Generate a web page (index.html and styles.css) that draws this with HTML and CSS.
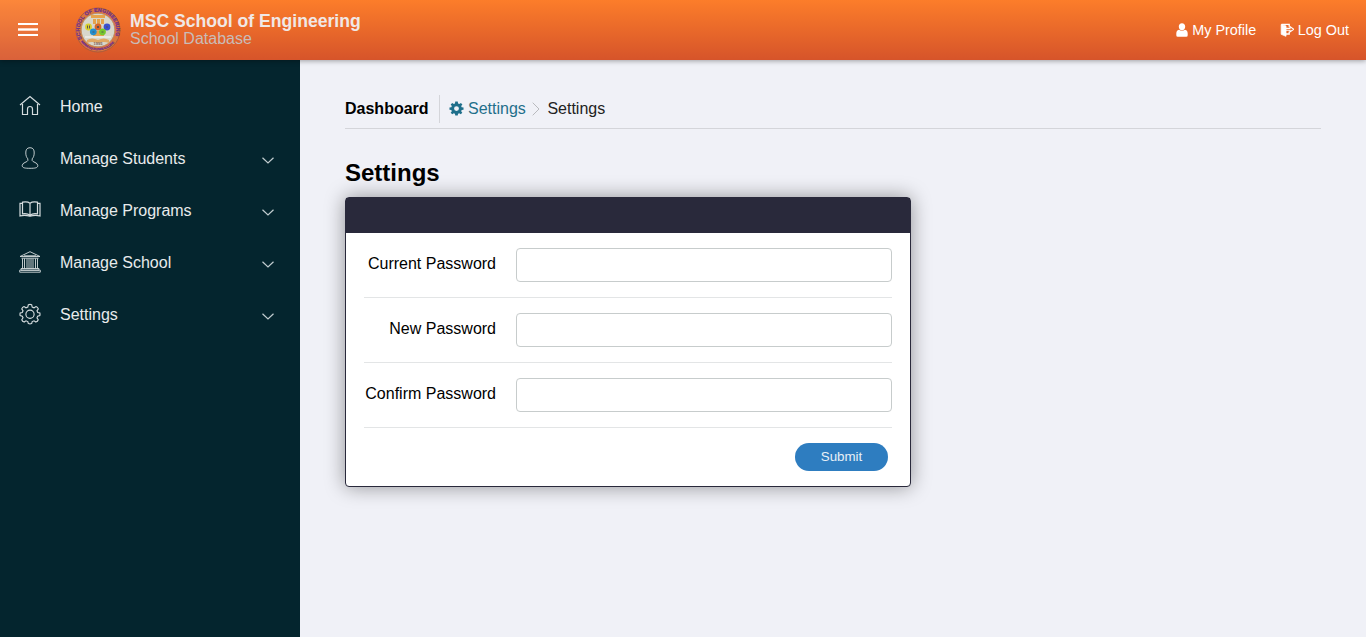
FILE: index.html
```html
<!DOCTYPE html>
<html lang="en">
<head>
<meta charset="utf-8">
<title>Settings</title>
<link rel="stylesheet" href="styles.css">
</head>
<body>
<header class="topbar">
  <button class="menu-toggle" aria-label="Menu"><span class="bar"></span><span class="bar middle"></span><span class="bar"></span></button>
  <svg class="logo" viewBox="0 0 46 46">
    <defs>
      <path id="arc-top" d="M7.100 31.800 A18.200 18.200 0 1 1 38.900 31.800"/>
      <path id="arc-bottom" d="M6 34.500 A20.900 20.900 0 0 0 40 34.500"/>
    </defs>
    <circle cx="23" cy="23" r="22" fill="#d9763f" stroke="#a55a3c" stroke-width=".9"/>
    <circle cx="23" cy="23" r="16.8" fill="#d8d7cb" stroke="#b9875a" stroke-width=".8"/>
    <path d="M16 8h14v3H16zM18 12h3v5h-3zM22 12h3v5h-3zM26 12h3v5h-3zM18 24h11v6H18z" fill="#e5a34c"/>
    <path d="M12 33q5-3 11 0q6-3 11 0v3q-5-2-11 0q-6-2-11 0z" fill="#e0a863"/>
    <path d="M10 30h26" stroke="#e8e8e2" stroke-width="2"/>
    <circle cx="13.5" cy="20" r="3.4" fill="#d9cf2c"/>
    <circle cx="23" cy="20" r="3.4" fill="#d7662a"/>
    <circle cx="32" cy="20" r="3.4" fill="#3b50d0"/>
    <circle cx="18.3" cy="24.8" r="3.4" fill="#238fce"/>
    <circle cx="27.5" cy="24.8" r="3.4" fill="#75c72d"/>
    <path d="M12.5 18.5v3M14.5 18.5v3M22 19l2 2M24 19l-2 2M31 20h2M17.5 25h2M26.5 25h2" stroke="#514c58" stroke-width=".9"/>
    <text class="seal-year" x="23" y="37.500" text-anchor="middle">1995</text>
    <text class="seal-top"><textPath href="#arc-top" textLength="72">SCHOOL OF ENGINEERING</textPath></text>
    <text class="seal-bottom"><textPath href="#arc-bottom" textLength="38">MARINDUQUE STATE COLLEGE</textPath></text>
  </svg>
  <div class="brand">
    <div class="brand-name">MSC School of Engineering</div>
    <div class="brand-sub">School Database</div>
  </div>
  <nav class="user-nav">
    <a class="user-link"><svg class="user-icon" width="12" height="14" viewBox="0 0 12 14"><path d="M6 .3C8 .3 9.200 1.600 9.200 3.600S8 7.400 6 7.400 2.800 5.600 2.800 3.600 4 .3 6 .3zM3 6.800Q6 9 9 6.800C10.900 7.200 11.700 8.600 11.700 10.500V12.200Q11.700 13.700 10.200 13.700H1.800Q.3 13.700.3 12.200V10.500C.3 8.600 1.100 7.200 3 6.800z" fill="#fff"/></svg>My Profile</a>
    <a class="user-link"><svg class="exit-icon" width="14" height="14" viewBox="0 0 14 14"><path d="M1.200 1.500L6 2.900V13.300L1.200 11.300z" fill="#fff" stroke="#fff" stroke-width=".8"/><path d="M1.500 1.300H9.200V3.800M9.200 8.600V11H6" fill="none" stroke="#fff" stroke-width="1.300"/><path d="M6 5.400H10V3.500L13.700 6.200L10 9V7.300H6" fill="none" stroke="#fff" stroke-width="1.100"/></svg>Log Out</a>
  </nav>
</header>
<div class="layout">
  <aside class="sidebar">
    <a class="side-item">
      <svg class="side-icon" viewBox="0 0 22 22"><path d="M1 10L11 1.500L21 10M3.500 9V19.500H8.500V14Q8.500 11.500 11 11.500T13.500 14V19.500H18.500V9"/></svg>
      <span class="side-label">Home</span>
    </a>
    <a class="side-item">
      <svg class="side-icon thin" viewBox="0 0 22 22"><path d="M11 .7C7.700.7 6.700 3 6.800 6C6.800 8.600 7.600 10.500 8.800 11.800V13.600C8.800 15 3.200 15.500 3.200 18.500C3.200 21 6 21.300 11 21.300S18.800 21 18.800 18.500C18.800 15.500 13.200 15 13.200 13.600V11.800C14.400 10.500 15.200 8.600 15.200 6C15.300 3 14.300.7 11 .7z"/></svg>
      <span class="side-label">Manage Students</span>
      <svg class="chevron" viewBox="0 0 12 7"><path d="M.5.7L6 6L11.500.7"/></svg>
    </a>
    <a class="side-item">
      <svg class="side-icon" viewBox="0 0 22 22"><path d="M11 4.200V16.500M11 4.200C9 2.700 6 2.700 3.500 3.200V14.800C6 14.400 9 14.500 11 16.300C13 14.500 16 14.400 18.500 14.800V3.200C16 2.700 13 2.700 11 4.200M3.500 4.300H1V17Q6 15.800 11 17.300Q16 15.800 21 17V4.300H18.500"/></svg>
      <span class="side-label">Manage Programs</span>
      <svg class="chevron" viewBox="0 0 12 7"><path d="M.5.7L6 6L11.500.7"/></svg>
    </a>
    <a class="side-item">
      <svg class="side-icon thin" viewBox="0 0 22 22"><path d="M1 5.500L11 .7L21 5.500H1M2.500 7.200H19.500M3.500 7.500V17.500M5.500 7.500V17.500M8 7.500V17.500M10 7.500V17.500M12 7.500V17.500M14 7.500V17.500M16.500 7.500V17.500M18.500 7.500V17.500M2 17.500H20V19.200H2zM.7 19.200H21.300V21.200H.7zM5 4.800H17"/></svg>
      <span class="side-label">Manage School</span>
      <svg class="chevron" viewBox="0 0 12 7"><path d="M.5.7L6 6L11.500.7"/></svg>
    </a>
    <a class="side-item">
      <svg class="side-icon" viewBox="-.5 -.5 23 23"><path d="M9.300 1.300Q11 .6 12.700 1.300L13.300 3.700L15.200 4.500L17.300 3.200Q19 3.700 19.700 5.600L18.300 7.700L19.100 9.400L21.300 10Q21.700 11.300 21.300 12.700L19 13.300L18.300 15L19.600 17Q19 18.900 17.200 19.400L15.200 18.100L13.300 18.900L12.700 21Q11 21.600 9.300 21L8.700 18.900L6.800 18.100L4.800 19.400Q3 18.900 2.400 17L3.700 15L2.900 13.300L.7 12.700Q.3 11.300.7 10L2.900 9.400L3.700 7.700L2.400 5.600Q3 3.700 4.800 3.200L6.800 4.500L8.700 3.700z"/><circle cx="11" cy="11.200" r="4.300"/></svg>
      <span class="side-label">Settings</span>
      <svg class="chevron" viewBox="0 0 12 7"><path d="M.5.7L6 6L11.500.7"/></svg>
    </a>
  </aside>
  <main class="content">
    <nav class="breadcrumb">
      <b class="crumb-root">Dashboard</b>
      <a class="crumb-link"><svg class="gear" viewBox="0 0 16 16"><path fill-rule="evenodd" d="M6.700.6H9.300L9.700 2.600L11 3.100L12.700 2L14.300 3.700L13 5.400L13.500 6.600L15.500 7V9.300L13.500 9.700L13 11L14.200 12.600L12.500 14.200L10.900 13L9.700 13.500L9.300 15.500H6.700L6.300 13.500L5.100 13L3.500 14.200L1.800 12.600L3 11L2.500 9.700L.5 9.300V7L2.500 6.600L3 5.400L1.800 3.700L3.500 2L5.100 3.100L6.300 2.600zM8 5.500A2.600 2.600 0 1 0 8 10.700A2.600 2.600 0 1 0 8 5.500z" fill="#1f6f8b"/></svg>Settings</a>
      <svg class="crumb-arrow" viewBox="0 0 8 14"><path d="M.7.7L7 7L.7 13.300" fill="none" stroke="#b9babe"/></svg>
      <span class="crumb-here">Settings</span>
    </nav>
    <h1 class="title">Settings</h1>
    <section class="card">
      <div class="card-head"></div>
      <form class="form">
        <div class="row"><label class="label" for="current">Current Password</label><input class="field" id="current" type="password"></div>
        <div class="row"><label class="label" for="new">New Password</label><input class="field" id="new" type="password"></div>
        <div class="row"><label class="label" for="confirm">Confirm Password</label><input class="field" id="confirm" type="password"></div>
        <div class="actions"><button class="submit" type="button">Submit</button></div>
      </form>
    </section>
  </main>
</div>
</body>
</html>
```
FILE: styles.css
```css
* { box-sizing: border-box; }
body {
  margin: 0;
  height: 637px;
  overflow: hidden;
  display: flex;
  flex-direction: column;
  background: #f0f1f7;
  font: 16px/20px "Liberation Sans", Arial, sans-serif;
  color: #000;
}
.topbar {
  position: relative;
  z-index: 1;
  height: 60px;
  flex: none;
  display: flex;
  align-items: center;
  background: linear-gradient(#fc7d2a, #d6542a);
  box-shadow: 0 1px 5px rgba(0, 0, 0, .35);
}
.menu-toggle {
  width: 60px;
  height: 60px;
  padding: 0 22px 1px 18px;
  border: 0;
  display: flex;
  flex-direction: column;
  justify-content: center;
  gap: 3px;
  background: rgba(255, 255, 255, .08);
}
.bar { height: 2px; background: #fff; }
.middle { height: 3px; background: linear-gradient(#fbd3bd 33%, #fff 33%, #fff 67%, #fbd3bd 67%); }
.logo { width: 46px; height: 46px; margin-left: 14.500px; }
.seal-top { font: bold 5.200px "Liberation Sans", sans-serif; fill: #70308a; stroke: #70308a; stroke-width: .25px; }
.seal-bottom { font: bold 2.800px "Liberation Sans", sans-serif; fill: #70308a; stroke: #70308a; stroke-width: .2px; }
.seal-year { font: bold 4px "Liberation Sans", sans-serif; fill: #785f58; }
.brand { margin: -2px 0 0 9.500px; }
.brand-name { font-size: 17.600px; line-height: 20px; font-weight: bold; color: #f0e8e6; }
.brand-sub { font-size: 16px; line-height: 16px; color: #c9bcb8; }
.user-nav { margin-left: auto; margin-right: 17px; display: flex; gap: 23.500px; }
.user-link { display: flex; align-items: center; font-size: 14.400px; color: #fff; }
.user-icon { margin-right: 4.500px; }
.exit-icon { margin-right: 4px; }
.layout { flex: 1; display: flex; }
.sidebar { width: 300px; padding-top: 20px; background: #04252e; }
.side-item { height: 52px; padding: 0 26px 0 19px; display: flex; align-items: center; color: #e8ebec; }
.side-label { padding-top: 2px; }
.side-icon { width: 22px; height: 22px; margin: -1px 19px 0 0; fill: none; stroke: #d5dcde; stroke-width: 1.200; }
.thin { stroke-width: .9; }
.chevron { width: 12px; height: 7px; margin: 4px 0 0 auto; fill: none; stroke: #c2cdd0; stroke-width: 1.200; }
.content { flex: 1; padding: 35px 45px 0; }
.breadcrumb { height: 34px; display: flex; align-items: flex-start; line-height: 27px; border-bottom: 1px solid #d4d5da; }
.crumb-root { padding-right: 10.400px; border-right: 1px solid #d4d5da; height: 28px; }
.crumb-link { display: flex; align-items: center; margin-left: 9px; color: #1f6f8b; }
.gear { width: 15px; height: 15px; margin-right: 4px; }
.crumb-arrow { width: 8px; height: 14px; margin: 7px 7px 0 6.600px; }
.crumb-here { color: #222; }
.title { margin: 30px 0 10px; font-size: 24px; line-height: 28px; }
.card { width: 566px; height: 290px; border: 1px solid #29293b; border-radius: 4px; background: #fff; box-shadow: 0 0 20px rgba(0, 0, 0, .4); }
.card-head { height: 35px; background: #29293b; }
.form { padding: 0 18px; }
.row { height: 65px; padding-top: 15px; display: flex; border-bottom: 1px solid #e3e5e6; }
.label { width: 132px; padding-top: 6px; text-align: right; white-space: nowrap; }
.field { width: 376px; height: 34px; margin-left: auto; border: 1px solid #c7cccc; border-radius: 4px; background: #fff; }
.actions { padding: 15px 4px 0 0; display: flex; justify-content: flex-end; }
.submit { width: 93px; height: 28px; padding: 0 6px 2px; border: 0; border-radius: 14px; background: #2e7dc0; color: #e8f0f7; font: 13.333px "Liberation Sans", Arial, sans-serif; }
```
